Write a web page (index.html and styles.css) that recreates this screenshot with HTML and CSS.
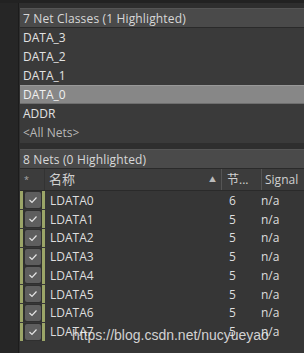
FILE: index.html
```html
<!DOCTYPE html>
<html>
<head>
<meta charset="utf-8">
<link rel="stylesheet" href="styles.css">
</head>
<body>
<div class="app">
  <div class="side"></div>
  <div class="main">
    <section class="panel classes">
      <div class="phead">7 Net Classes (1 Highlighted)</div>
      <div class="row">DATA_3</div>
      <div class="row">DATA_2</div>
      <div class="row">DATA_1</div>
      <div class="row sel">DATA_0</div>
      <div class="row">ADDR</div>
      <div class="row dim">&lt;All Nets&gt;</div>
    </section>
    <section class="panel nets">
      <div class="phead">8 Nets (0 Highlighted)</div>
      <div class="colhead">
        <span class="c-star">*</span>
        <span class="c-name">名称</span>
        <span class="c-sort">▲</span>
        <span class="c-node">节...</span>
        <span class="c-sig">Signal</span>
      </div>
      <div class="nrow"><span class="chk"><svg class="box" viewBox="0 0 16 16"><path d="M4.5 8 L7 10.5 L11.5 5.5"/></svg></span><span class="n-name">LDATA0</span><span class="n-node">6</span><span class="n-sig">n/a</span></div>
      <div class="nrow"><span class="chk"><svg class="box" viewBox="0 0 16 16"><path d="M4.5 8 L7 10.5 L11.5 5.5"/></svg></span><span class="n-name">LDATA1</span><span class="n-node">5</span><span class="n-sig">n/a</span></div>
      <div class="nrow"><span class="chk"><svg class="box" viewBox="0 0 16 16"><path d="M4.5 8 L7 10.5 L11.5 5.5"/></svg></span><span class="n-name">LDATA2</span><span class="n-node">5</span><span class="n-sig">n/a</span></div>
      <div class="nrow"><span class="chk"><svg class="box" viewBox="0 0 16 16"><path d="M4.5 8 L7 10.5 L11.5 5.5"/></svg></span><span class="n-name">LDATA3</span><span class="n-node">5</span><span class="n-sig">n/a</span></div>
      <div class="nrow"><span class="chk"><svg class="box" viewBox="0 0 16 16"><path d="M4.5 8 L7 10.5 L11.5 5.5"/></svg></span><span class="n-name">LDATA4</span><span class="n-node">5</span><span class="n-sig">n/a</span></div>
      <div class="nrow"><span class="chk"><svg class="box" viewBox="0 0 16 16"><path d="M4.5 8 L7 10.5 L11.5 5.5"/></svg></span><span class="n-name">LDATA5</span><span class="n-node">5</span><span class="n-sig">n/a</span></div>
      <div class="nrow"><span class="chk"><svg class="box" viewBox="0 0 16 16"><path d="M4.5 8 L7 10.5 L11.5 5.5"/></svg></span><span class="n-name">LDATA6</span><span class="n-node">5</span><span class="n-sig">n/a</span></div>
      <div class="nrow"><span class="chk"><svg class="box" viewBox="0 0 16 16"><path d="M4.5 8 L7 10.5 L11.5 5.5"/></svg></span><span class="n-name">LDATA7</span><span class="n-node">5</span><span class="n-sig">n/a</span></div>
    </section>
  </div>
</div>
<div class="wm">https://blog.csdn.net/nucyueyao</div>
</body>
</html>
```
FILE: styles.css
```css
html, body {
  margin: 0;
  padding: 0;
  width: 304px;
  height: 353px;
  overflow: hidden;
  background: #2c2c2c;
  font-family: "Open Sans", "Noto Sans CJK SC", sans-serif;
  font-size: 12px;
  color: #dcdcdc;
}
.app {
  display: flex;
  height: 353px;
  border-top: 3px solid #222;
  box-sizing: border-box;
  position: relative;
}
.side {
  width: 18px;
  flex: none;
  background: #262626;
  border-right: 1px solid #1c1c1c;
}
.main {
  flex: 1;
  display: flex;
  flex-direction: column;
  gap: 6px;
  padding-top: 5px;
  padding-left: 1px;
  background: #2e2e2e;
}
.panel {
  background: #3a3a3a;
}
.phead {
  height: 20px;
  line-height: 19px;
  background: #4a4a4a;
  border-top: 1px solid #555;
  border-bottom: 1px solid #2a2a2a;
  padding-left: 3px;
  color: #d8d8d8;
  box-sizing: border-box;
  letter-spacing: 0.15px;
}
.classes .row {
  height: 19px;
  line-height: 19px;
  padding-left: 3px;
  color: #e2e2e2;
}
.classes .row.sel {
  background: #878787;
  border-top: 1px solid #999;
  border-bottom: 1px solid #6e6e6e;
  box-sizing: border-box;
  line-height: 17px;
  color: #f0f0f0;
}
.classes .row.dim {
  color: #b8b8b8;
}
.classes {
  padding-bottom: 1px;
}
.nets {
  flex: 1;
  background: #363636;
}
.colhead {
  display: flex;
  height: 21px;
  line-height: 21px;
  align-items: center;
  background: #3c3c3c;
  border-bottom: 1px solid #2a2a2a;
  color: #d0d0d0;
}
.c-star { width: 24px; padding-left: 4px; box-sizing: border-box; font-size: 9px; color: #aaa; }
.c-name { flex: 1; padding-left: 4px; font-size: 13px; border-left: 1px solid #333; }
.c-sort { width: 12px; font-size: 7px; color: #bbb; }
.c-node { width: 40px; padding-left: 5px; border-left: 1px solid #555; box-sizing: border-box; }
.c-sig { width: 43px; padding-left: 3px; border-left: 1px solid #555; box-sizing: border-box; }
.nrow {
  display: flex;
  align-items: center;
  height: 18.75px;
  color: #dedede;
}
.chk {
  width: 25px;
  height: 18px;
  flex: none;
  border-left: 3px solid #9ba568;
  border-right: 3px solid #9ba568;
  box-sizing: border-box;
  display: flex;
  align-items: center;
  justify-content: center;
  background: #2f2f2f;
}
.box {
  width: 16px;
  height: 16px;
  background: #5e5e5e;
  border-radius: 2px;
  fill: none;
  stroke: #e4e4e4;
  stroke-width: 1.2;
}
.n-name { flex: 1; padding-left: 5px; }
.n-node { width: 37px; padding-left: 8px; box-sizing: border-box; }
.n-sig { width: 43px; padding-left: 3px; }
.wm {
  position: absolute;
  left: 72px;
  top: 327px;
  font-family: "Liberation Sans", Arial, sans-serif;
  font-size: 14px;
  color: rgba(240, 240, 240, 0.85);
  white-space: nowrap;
}
```
